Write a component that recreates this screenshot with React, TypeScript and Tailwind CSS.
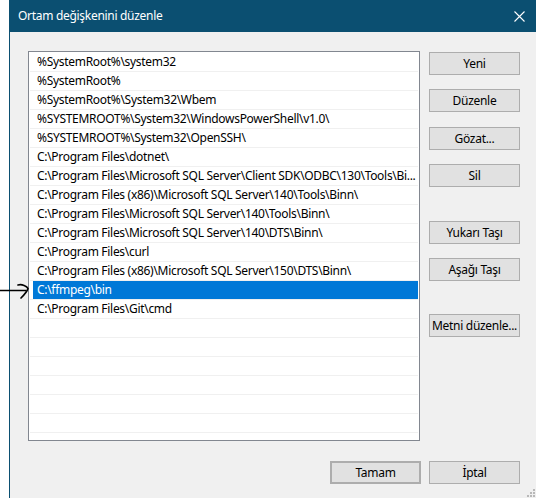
const paths = [
  "%SystemRoot%\\system32",
  "%SystemRoot%",
  "%SystemRoot%\\System32\\Wbem",
  "%SYSTEMROOT%\\System32\\WindowsPowerShell\\v1.0\\",
  "%SYSTEMROOT%\\System32\\OpenSSH\\",
  "C:\\Program Files\\dotnet\\",
  "C:\\Program Files\\Microsoft SQL Server\\Client SDK\\ODBC\\130\\Tools\\Bi...",
  "C:\\Program Files (x86)\\Microsoft SQL Server\\140\\Tools\\Binn\\",
  "C:\\Program Files\\Microsoft SQL Server\\140\\Tools\\Binn\\",
  "C:\\Program Files\\Microsoft SQL Server\\140\\DTS\\Binn\\",
  "C:\\Program Files\\curl",
  "C:\\Program Files (x86)\\Microsoft SQL Server\\150\\DTS\\Binn\\",
  "C:\\ffmpeg\\bin",
  "C:\\Program Files\\Git\\cmd",
]

const rows = [...paths, "", "", "", "", "", ""]
const selected = 12

function Btn({ label, className = "" }: { label: string; className?: string }) {
  return (
    <button
      className={`w-[91px] h-[23px] bg-[#e1e1e1] border border-[#adadad] text-[12px] text-black leading-none whitespace-nowrap px-0 ${className}`}
    >
      {label}
    </button>
  )
}

export default function App() {
  return (
    <div
      className="relative w-[536px] h-[498px] bg-white flex pl-[9px] overflow-hidden tracking-[-0.3px]"
      style={{ fontFamily: '"Segoe UI", "Noto Sans", sans-serif' }}
    >
      <div className="flex-1 flex flex-col border-l border-[#0b4f71]">
        <div className="h-[32px] bg-[#0b4f71] flex items-center justify-between pl-[8px] pr-[11px] text-white">
          <span className="text-[12px]">Ortam değişkenini düzenle</span>
          <svg width="11" height="11" viewBox="0 0 11 11">
            <path d="M0.5 0.5 L10.5 10.5 M10.5 0.5 L0.5 10.5" stroke="#fff" strokeWidth="1.1" />
          </svg>
        </div>

        <div className="flex-1 bg-[#f0f0f0] flex flex-col pl-[18px] pt-[19px]">
          <div className="flex">
            <div className="w-[392px] h-[390px] bg-white border border-[#828790] pt-[1px]">
              {rows.map((p, i) => (
                <div key={i} className="h-[19px] flex flex-col">
                  <div
                    className={`h-[18px] flex items-center text-[12px] whitespace-nowrap overflow-hidden ${
                      i === selected ? "bg-[#0078d7] text-white ml-[4px] pl-[4px] mr-[1px]" : "text-black pl-[8px]"
                    }`}
                  >
                    {p}
                  </div>
                  <div className="h-[1px] bg-[#f0f0f0] ml-[1px] mr-[1px]" />
                </div>
              ))}
            </div>

            <div className="flex flex-col ml-[9px] pt-[1px]">
              <Btn label="Yeni" />
              <Btn label="Düzenle" className="mt-[14px]" />
              <Btn label="Gözat..." className="mt-[15px]" />
              <Btn label="Sil" className="mt-[14px]" />
              <Btn label="Yukarı Taşı" className="mt-[34px]" />
              <Btn label="Aşağı Taşı" className="mt-[14px]" />
              <Btn label="Metni düzenle..." className="mt-[33px]" />
            </div>
          </div>

          <div className="flex justify-end gap-[8px] mt-[20px] pr-[16px]">
            <Btn label="Tamam" className="border-2 border-[#0078d7]" />
            <Btn label="İptal" />
          </div>
        </div>
      </div>

      {/* resize grip */}
      <svg className="absolute right-0 bottom-0" width="10" height="10" viewBox="0 0 10 10">
        {[
          [7, 1],
          [4, 4],
          [7, 4],
          [1, 7],
          [4, 7],
          [7, 7],
        ].map(([x, y], i) => (
          <rect key={i} x={x} y={y} width="2" height="2" fill="#b8b8b8" />
        ))}
      </svg>

      {/* hand drawn arrow */}
      <svg className="absolute left-0 top-[280px]" width="34" height="22" viewBox="0 0 34 22">
        <path d="M0 10.5 H26" stroke="#000" strokeWidth="1.5" fill="none" />
        <path
          d="M18 5 C22 4 27 6 28 8.5 C27 12 24 15 21 18"
          stroke="#000"
          strokeWidth="1.7"
          fill="none"
          strokeLinecap="round"
        />
      </svg>
    </div>
  )
}
